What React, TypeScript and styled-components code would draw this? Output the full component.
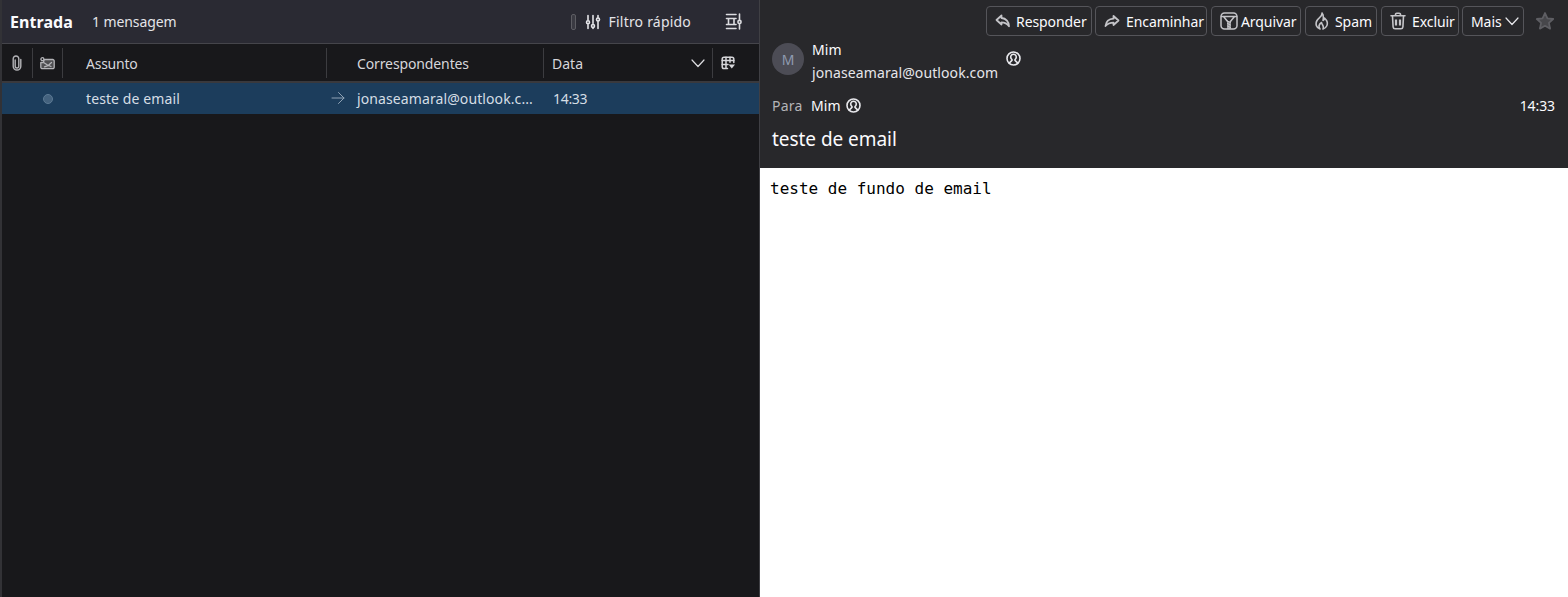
import React from 'react';
import styled, { createGlobalStyle } from 'styled-components';

const GlobalStyle = createGlobalStyle`
  html, body { margin: 0; padding: 0; background: #18181b; }
  body { font-family: 'Noto Sans', 'Open Sans', sans-serif; overflow: hidden; }
`;

const Window = styled.div`
  width: 1568px;
  height: 597px;
  display: grid;
  grid-template-columns: 760px 808px;
`;

const ListPane = styled.section`
  display: flex;
  flex-direction: column;
  background: #18181b;
  border-left: 2px solid #323236;
  border-right: 1px solid #3f3f44;
`;

const FolderBar = styled.header`
  height: 43px;
  flex: none;
  display: flex;
  align-items: center;
  padding: 0 17px 0 8px;
  background: #2a2a33;
  border-bottom: 1px solid #45454b;
  color: #fbfbfe;
`;

const FolderName = styled.span`
  font-size: 16px;
  font-weight: 700;
  letter-spacing: 0.08px;
`;

const MessageCount = styled.span`
  margin-left: 19px;
  font-size: 14px;
  letter-spacing: -0.1px;
  color: #e4e4e8;
`;

const Spacer = styled.span`
  flex: 1;
`;

const QuickFilter = styled.span`
  display: flex;
  align-items: center;
  font-size: 14px;
  letter-spacing: 0.2px;
  color: #e4e4e8;
`;

const FilterPill = styled.i`
  width: 3px;
  height: 14px;
  margin-right: 9px;
  border: 1px solid #5d5d63;
  border-radius: 2px;
  background: #3a3a42;
`;

const FilterLabel = styled.span`
  margin-left: 8px;
`;

const BarIcon = styled.span<{ $gap?: number }>`
  display: flex;
  margin-left: ${p => p.$gap ?? 0}px;
  color: #dcdce0;
`;

const SortIcon = styled(BarIcon)`
  margin-right: 7px;
`;

const ColumnGlyph = styled.span`
  display: flex;
  color: #b4b4b8;
`;

const columns = '31px 30px 264px 217px 169px 1fr';

const ColumnHeader = styled.div`
  height: 39px;
  flex: none;
  display: grid;
  grid-template-columns: ${columns};
  align-items: center;
  box-sizing: border-box;
  padding-top: 1px;
  border-bottom: 2px solid #39393d;
  color: #d6d6da;
  font-size: 14px;
`;

const HeadCell = styled.div<{ $pad?: number; $spacing?: number }>`
  height: 30px;
  display: flex;
  align-items: center;
  padding-left: ${p => p.$pad ?? 0}px;
  justify-content: ${p => (p.$pad === undefined ? 'center' : 'flex-start')};
  border-right: 1px solid #3c3c40;
  letter-spacing: ${p => p.$spacing ?? -0.12}px;
`;

const EndCell = styled(HeadCell)`
  border-right: 0;
  padding-left: 8px;
  justify-content: flex-start;
`;

const MessageRow = styled.div`
  height: 31px;
  flex: none;
  display: grid;
  grid-template-columns: ${columns};
  align-items: center;
  background: #1c3d5c;
  color: #d5dde5;
  font-size: 14px;
  letter-spacing: 0.1px;
`;

const RowCell = styled.div<{ $pad?: number }>`
  display: flex;
  align-items: center;
  justify-content: ${p => (p.$pad === undefined ? 'center' : 'flex-start')};
  padding-left: ${p => p.$pad ?? 0}px;
  min-width: 0;
  white-space: nowrap;
`;

const SenderCell = styled(RowCell)`
  position: relative;
`;

const TimeCell = styled(RowCell)`
  letter-spacing: -0.3px;
`;

const SenderArrow = styled.span`
  position: absolute;
  left: 4px;
  top: 2px;
  display: flex;
  color: #8fa3b5;
`;

const ReadDot = styled.i`
  width: 8px;
  height: 8px;
  border-radius: 50%;
  background: #44627e;
  border: 1px solid #5c7a94;
`;

const ReaderPane = styled.section`
  display: flex;
  flex-direction: column;
  background: #fff;
`;

const MessageHeader = styled.header`
  height: 168px;
  flex: none;
  box-sizing: border-box;
  padding: 6px 13px 0 12px;
  background: #28282b;
  color: #fbfbfe;
  display: flex;
  flex-direction: column;
`;

const Toolbar = styled.div`
  height: 30px;
  flex: none;
  display: flex;
  justify-content: flex-end;
  align-items: center;
  gap: 3px;
`;

const ActionButton = styled.button<{ $width: number; $iconGap?: number; $extra?: number }>`
  width: ${p => p.$width}px;
  height: 30px;
  margin-left: ${p => p.$extra ?? 0}px;
  padding: 0 4px 0 8px;
  box-sizing: border-box;
  display: flex;
  align-items: center;
  gap: ${p => p.$iconGap ?? 5}px;
  background: #28282b;
  border: 1px solid #55555a;
  border-radius: 4px;
  color: #fbfbfe;
  font-family: inherit;
  font-size: 14px;
  letter-spacing: -0.08px;
  white-space: nowrap;
`;

const ActionIcon = styled.span<{ $bright?: boolean }>`
  display: flex;
  flex: none;
  color: ${p => (p.$bright ? '#e8e8ec' : '#c4c4c8')};
`;

const StarIcon = styled.span`
  display: flex;
  margin-left: 8px;
  color: #5e5e63;
`;

const SenderRow = styled.div`
  display: flex;
  margin-top: 4px;
`;

const Avatar = styled.div`
  width: 32px;
  height: 32px;
  margin-top: 3px;
  border-radius: 50%;
  background: #4c4c55;
  color: #8f9bb0;
  font-size: 14px;
  display: flex;
  align-items: center;
  justify-content: center;
`;

const SenderText = styled.div`
  margin-left: 8px;
  display: flex;
  flex-direction: column;
`;

const SenderName = styled.span`
  font-size: 14px;
  line-height: 19px;
  letter-spacing: 0.05px;
`;

const SenderMail = styled.span`
  font-size: 14px;
  line-height: 28px;
  letter-spacing: 0.1px;
  color: #e6e6ea;
`;

const ContactIcon = styled.span<{ $left: number; $top?: number }>`
  display: flex;
  margin-left: ${p => p.$left}px;
  margin-top: ${p => p.$top ?? 0}px;
  color: #e8e8ec;
`;

const RecipientRow = styled.div`
  display: flex;
  align-items: center;
  height: 20px;
  margin-top: 8px;
  font-size: 14px;
  letter-spacing: 0.05px;
`;

const RecipientLabel = styled.span`
  width: 39px;
  color: #b4b4b8;
  letter-spacing: 0.2px;
`;

const RecipientTime = styled.span`
  margin-left: auto;
  font-size: 14px;
  letter-spacing: -0.1px;
`;

const Subject = styled.div`
  margin-top: 12px;
  font-size: 19px;
  line-height: 25px;
  letter-spacing: -0.05px;
`;

const MessageBody = styled.pre`
  margin: 0;
  padding: 11px 10px;
  color: #000;
  font-family: 'DejaVu Sans Mono', monospace;
  font-size: 16px;
  line-height: 19px;
`;

const Svg = styled.svg`
  display: block;
  fill: none;
  stroke: currentColor;
  stroke-linecap: round;
  stroke-linejoin: round;
`;

function SlidersGlyph() {
  return (
    <Svg width="16" height="16" viewBox="0 0 16 16" strokeWidth="1.6">
      <path d="M3 1.5V6M3 10.5v4M8 1.5V9.500M8 14v.5M13 1.500V3.500M13 7.500v7" />
      <circle cx="3" cy="8.200" r="1.500" />
      <circle cx="8" cy="12" r="1.500" />
      <circle cx="13" cy="5.500" r="1.500" />
    </Svg>
  );
}

function LayoutGlyph() {
  return (
    <Svg width="17" height="17" viewBox="0 0 17 17" strokeWidth="1.6">
      <path d="M1.500 1.500h9.500M1.500 15.500h9.500M1.500 5.500h9.500M1.500 11.500h9.500M3.500 5.500v6M9 5.500v6" />
      <path d="M14.500 1v5.500M14.500 11.500v4.500" />
      <circle cx="14.500" cy="9" r="1.600" />
    </Svg>
  );
}

function ClipGlyph() {
  return (
    <Svg width="12" height="16" viewBox="0 0 12 16" strokeWidth="1.4">
      <path d="M4.200 5v6.200a1.800 1.800 0 0 0 3.600 0V3.800a2.800 2.800 0 0 0-5.600 0v7.400a3.800 3.800 0 0 0 7.600 0V4.500" />
    </Svg>
  );
}

function JunkGlyph() {
  return (
    <Svg width="15" height="13" viewBox="0 0 15 13" strokeWidth="1.300">
      <circle cx="2.400" cy="2.200" r="1.500" />
      <path d="M5.500 2.500h7.200a1.500 1.500 0 0 1 1.500 1.500v6.200a1.500 1.500 0 0 1-1.500 1.500H2.300a1.500 1.500 0 0 1-1.500-1.500V5.500h2.500l1-3z" fill="currentColor" fillOpacity="0.35" />
      <path d="M4 5.800L7.500 8l3.500 1.500M11.500 5.500L8.500 8.300 4.500 9.800" />
    </Svg>
  );
}

function ColumnPickerGlyph() {
  return (
    <Svg width="14" height="14" viewBox="0 0 14 14" strokeWidth="1.500">
      <path d="M6.500 12.500H3A1.800 1.800 0 0 1 1.200 10.700V3A1.800 1.800 0 0 1 3 1.200h8A1.800 1.800 0 0 1 12.800 3v3.500" />
      <path d="M1.200 4.600h11.600M5 1.200v11M9 1.200v5M1.200 8.500H7" />
      <path d="M7.600 8.400h6.400l-3.200 4z" fill="currentColor" stroke="none" />
    </Svg>
  );
}

function ChevronGlyph() {
  return (
    <Svg width="14" height="14" viewBox="0 0 14 14" strokeWidth="1.200">
      <path d="M1 4l6 6.500L13 4" />
    </Svg>
  );
}

function ArrowGlyph() {
  return (
    <Svg width="14" height="14" viewBox="0 0 14 14" strokeWidth="1">
      <path d="M1 7h12M7.500 1.500L13 7l-5.500 5.500" />
    </Svg>
  );
}

function ReplyGlyph() {
  return (
    <Svg width="16" height="14" viewBox="0 0 16 14" strokeWidth="1.800">
      <path d="M6.500 1.500L1.500 6l5 4.500V8.300c3 0 5.500 1 7.500 4C14 7.800 11 4.300 6.500 4z" />
    </Svg>
  );
}

function ForwardGlyph() {
  return (
    <Svg width="16" height="14" viewBox="0 0 16 14" strokeWidth="1.800">
      <path d="M9.500 2l5 4.500-5 4.500V8.700c-3.500 0-6 1-8 3.300C2 7.800 5 5 9.500 4.700z" />
    </Svg>
  );
}

function ArchiveGlyph() {
  return (
    <Svg width="18" height="18" viewBox="0 0 18 18" strokeWidth="1.500">
      <rect x="1" y="1" width="16" height="16" rx="3.500" />
      <path d="M1.500 4.500h15M3.500 4.500L8 10v6.500M14.500 4.500L10 10v6.500" />
      <path d="M7.500 9l3 1.500M7.500 11.500l3 1.500M7.500 14l3 1.500" strokeWidth="1" />
    </Svg>
  );
}

function FlameGlyph() {
  return (
    <Svg width="15" height="18" viewBox="0 0 15 18" strokeWidth="1.600">
      <path d="M8 1c.5 3-3 4.500-5 7.500-2 3.500-.5 7.500 3 8.500-1.500-2-1.500-4.500 1.500-6.500 0 2 3 3 1.500 6.500 3.500-1 5-4.500 4-7.500-.5-1.500-1.500-2.500-2.500-3.500 0 1.500-.5 2-1.500 2.500C9.500 6 10 3 8 1z" />
    </Svg>
  );
}

function TrashGlyph() {
  return (
    <Svg width="16" height="18" viewBox="0 0 16 18" strokeWidth="1.600">
      <path d="M1 3.800h14M5.500 3.500V2.500a1.300 1.300 0 0 1 1.300-1.300h2.400a1.300 1.300 0 0 1 1.300 1.300v1" />
      <path d="M2.500 4l.6 11a2 2 0 0 0 2 1.800h5.800a2 2 0 0 0 2-1.800l.6-11" />
      <path d="M6 7.500v6M10 7.500v6" strokeWidth="2.200" strokeLinecap="butt" />
    </Svg>
  );
}

function StarGlyph() {
  return (
    <Svg width="20" height="20" viewBox="0 0 18 18" strokeWidth="1.600">
      <path d="M9 1.800l2.200 4.800 5.200.6-3.900 3.500 1.100 5.200L9 13.300 4.400 15.900l1.100-5.200L1.600 7.200l5.200-.6z" fill="#47474b" />
    </Svg>
  );
}

function ContactGlyph() {
  return (
    <Svg width="15" height="15" viewBox="0 0 15 15" strokeWidth="1.600">
      <circle cx="7.500" cy="7.500" r="6.500" />
      <path d="M7.500 3.200a2.800 2.800 0 0 1 2.800 2.800c0 1.200-.6 2-1.300 2.600v.8l2.600 2.500M7.500 3.200A2.800 2.800 0 0 0 4.700 6c0 1.200.6 2 1.300 2.600v.8l-2.600 2.500" />
    </Svg>
  );
}

function App() {
  return (
    <>
      <GlobalStyle />
      <Window>
        <ListPane>
          <FolderBar>
            <FolderName>Entrada</FolderName>
            <MessageCount>1 mensagem</MessageCount>
            <Spacer />
            <QuickFilter>
              <FilterPill />
              <SlidersGlyph />
              <FilterLabel>Filtro rápido</FilterLabel>
            </QuickFilter>
            <BarIcon $gap={34}><LayoutGlyph /></BarIcon>
          </FolderBar>
          <ColumnHeader>
            <HeadCell><ColumnGlyph><ClipGlyph /></ColumnGlyph></HeadCell>
            <HeadCell><ColumnGlyph><JunkGlyph /></ColumnGlyph></HeadCell>
            <HeadCell $pad={23} $spacing={-0.25}>Assunto</HeadCell>
            <HeadCell $pad={30}>Correspondentes</HeadCell>
            <HeadCell $pad={8} $spacing={0}>
              Data
              <Spacer />
              <SortIcon><ChevronGlyph /></SortIcon>
            </HeadCell>
            <EndCell><ColumnPickerGlyph /></EndCell>
          </ColumnHeader>
          <MessageRow>
            <RowCell />
            <RowCell><ReadDot /></RowCell>
            <RowCell $pad={23}>teste de email</RowCell>
            <SenderCell $pad={30}>
              <SenderArrow><ArrowGlyph /></SenderArrow>
              jonaseamaral@outlook.c...
            </SenderCell>
            <TimeCell $pad={9}>14:33</TimeCell>
            <RowCell />
          </MessageRow>
        </ListPane>
        <ReaderPane>
          <MessageHeader>
            <Toolbar>
              <ActionButton $width={106} $iconGap={5}><ActionIcon><ReplyGlyph /></ActionIcon>Responder</ActionButton>
              <ActionButton $width={112} $iconGap={6}><ActionIcon><ForwardGlyph /></ActionIcon>Encaminhar</ActionButton>
              <ActionButton $width={90} $iconGap={3} $extra={1}><ActionIcon><ArchiveGlyph /></ActionIcon>Arquivar</ActionButton>
              <ActionButton $width={72} $iconGap={6} $extra={1}><ActionIcon><FlameGlyph /></ActionIcon>Spam</ActionButton>
              <ActionButton $width={78} $iconGap={6} $extra={1}><ActionIcon><TrashGlyph /></ActionIcon>Excluir</ActionButton>
              <ActionButton $width={62} $iconGap={3}>Mais<ActionIcon $bright><ChevronGlyph /></ActionIcon></ActionButton>
              <StarIcon><StarGlyph /></StarIcon>
            </Toolbar>
            <SenderRow>
              <Avatar>M</Avatar>
              <SenderText>
                <SenderName>Mim</SenderName>
                <SenderMail>jonaseamaral@outlook.com</SenderMail>
              </SenderText>
              <ContactIcon $left={8} $top={11}><ContactGlyph /></ContactIcon>
            </SenderRow>
            <RecipientRow>
              <RecipientLabel>Para</RecipientLabel>
              Mim
              <ContactIcon $left={5}><ContactGlyph /></ContactIcon>
              <RecipientTime>14:33</RecipientTime>
            </RecipientRow>
            <Subject>teste de email</Subject>
          </MessageHeader>
          <MessageBody>teste de fundo de email</MessageBody>
        </ReaderPane>
      </Window>
    </>
  );
}

export default App;
